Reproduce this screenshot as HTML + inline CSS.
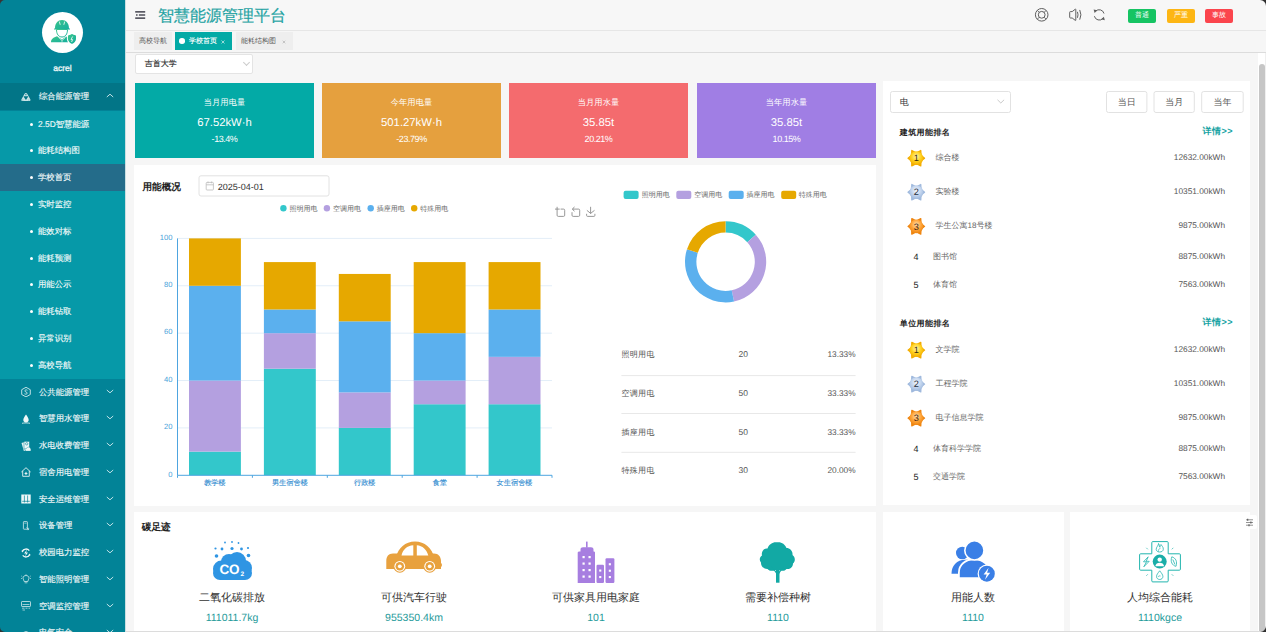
<!DOCTYPE html>
<html><head><meta charset="utf-8">
<style>
*{box-sizing:border-box;margin:0;padding:0}
html,body{width:1266px;height:632px;overflow:hidden;background:#f6f6f6;font-family:"Liberation Sans",sans-serif;color:#333;text-rendering:geometricPrecision}
.a{position:absolute}
#side{left:0;top:0;width:125px;height:632px;background:#028397}
#side .top{left:0;top:0;width:125px;height:83px;background:#028397}
.avatar{left:42px;top:12px;width:41px;height:41px;border-radius:50%;background:#fff}
.uname{left:0;top:62px;width:125px;text-align:center;color:#e8f4f5;font-size:8.5px;line-height:12px;-webkit-text-stroke:0.35px #e8f4f5}
.mh{left:0;width:125px;height:26.75px;color:#eef;font-size:9px;line-height:27px;-webkit-text-stroke:0.15px #f0f7f8}
.mh .t{position:absolute;left:39px;top:0;color:#f0f7f8;transform:scale(0.93);transform-origin:0 50%;white-space:nowrap}
.mh .ic{position:absolute;left:21px;top:9px;width:10px;height:10px}
.mh .ch{position:absolute;left:107.3px;top:9.2px;width:4.4px;height:4.4px;border-right:1px solid #cde;border-bottom:1px solid #cde;transform:rotate(45deg)}
.mh .ch2{position:absolute;left:105.5px;top:10.1px}
.mh .chx.up{transform:rotate(-135deg);top:12.5px}
.sub{left:0;top:110.5px;width:125px;height:268px;background:#0699a8}
.si{position:absolute;left:0;width:125px;height:26.8px;line-height:27px;font-size:9px;color:#f2fafa;-webkit-text-stroke:0.15px #f2fafa}
.si .b{position:absolute;left:29.7px;top:12px;width:3px;height:3px;border-radius:50%;background:#fff}
.si .t{position:absolute;left:38px;top:0;transform:scale(0.93);transform-origin:0 50%;white-space:nowrap}
.si.sel{background:#246c8a}
#hdr{left:125px;top:0;width:1141px;height:31px;background:#f7f7f7;border-bottom:1px solid #e6e6e6}
#tabs{left:125px;top:31px;width:1141px;height:22px;background:#f6f6f6;border-bottom:1px solid #dcdcdc}
.tab{position:absolute;top:1.3px;height:17.5px;line-height:19px;font-size:7px;color:#555;background:#eeeeee}
.card{position:absolute;background:#fff}
.bt{position:absolute;top:590.8px;width:100px;text-align:center;font-size:11px;line-height:14px;color:#333}
.bv{position:absolute;top:610.6px;width:100px;text-align:center;font-size:10.5px;line-height:14px;color:#1e9a9a}
.btn{top:8.5px;width:28px;height:14.5px;border-radius:2px;color:#fff;font-size:7px;line-height:14.5px;text-align:center}
.kpi{position:absolute;top:83px;width:179px;height:75px;color:#fff;text-align:center}
.kt{position:absolute;left:0;width:100%;top:13px;font-size:9px;line-height:12px;transform:scale(0.92);transform-origin:50% 50%}
.kv{position:absolute;left:0;width:100%;top:33.3px;font-size:11.3px;line-height:14px}
.kp{position:absolute;left:0;width:100%;top:51px;font-size:9px;line-height:11px;letter-spacing:-0.45px}
</style></head><body>
<div id="side" class="a">
  <div class="a top"></div>
  <div class="a avatar"></div>
  <svg class="a" style="left:42px;top:12px" width="41" height="41" viewBox="42 12 41 41">
   <defs><linearGradient id="ag" x1="0" y1="0" x2="1" y2="1"><stop offset="0" stop-color="#3cc58a"/><stop offset="1" stop-color="#14ae9f"/></linearGradient></defs>
   <g fill="url(#ag)">
    <path d="M55 28.5C55 23 58 20 62 20C66 20 69 23 69 28.5H70V29.5H54V28.5Z"/>
    <path d="M56.5 29.5H67.5C67.5 34 65.5 37 62 37C58.5 37 56.5 34 56.5 29.5Z" fill="none" stroke="url(#ag)" stroke-width="1"/>
    <path d="M51 42.3C51 39 53.5 37.3 57 36.3L62 39.5L66 36.5C67 37 67.5 37.3 68 37.5V42.3Z"/>
    <path d="M72 34L76 35.5V39C76 41.5 74.5 43 72 44C69.5 43 68 41.5 68 39V35.5Z"/>
   </g>
   <path d="M59.3 21.5L60.2 24.8M64.7 21.5L63.8 24.8" stroke="#fff" stroke-width="0.8"/>
   <path d="M58.5 37.5L62 40.5L65.5 37.5M62 40.5V42.3" stroke="#fff" stroke-width="0.6" fill="none"/>
   <path d="M72 33.3L76.6 35V39C76.6 41.8 74.8 43.5 72 44.6C69.2 43.5 67.4 41.8 67.4 39V35Z" fill="none" stroke="#fff" stroke-width="1"/>
   <path d="M72.6 36.5L71 39.6H72.6L71.6 42" stroke="#fff" stroke-width="0.8" fill="none"/>
  </svg>
  <div class="a uname">acrel</div>
  <div class="a mh" style="top:83.3px;height:27.2px;background:#027587"><span class="t">综合能源管理</span><svg class="ch2" width="8" height="5" viewBox="0 0 8 5"><path d="M0.8 4L4 1.2L7.2 4" fill="none" stroke="#d6ecef" stroke-width="0.9"/></svg></div>
  <svg class="a" style="left:20.6px;top:91.9px" width="10" height="10" viewBox="0 0 10 10"><path d="M4.9 0.9C5.5 0.9 5.9 1.2 6.2 1.7L9.3 7.3C9.8 8.2 9.3 9.1 8.3 9.1H1.5C0.5 9.1 0 8.2 0.5 7.3L3.6 1.7C3.9 1.2 4.3 0.9 4.9 0.9Z" fill="#c9e3e6"/><path d="M2.9 4.2H6.9Q7.4 4.2 7.1 4.8L5.3 7.5Q4.9 8 4.5 7.5L2.7 4.8Q2.4 4.2 2.9 4.2Z" fill="#027587"/><circle cx="4.9" cy="2.7" r="0.65" fill="#027587"/><circle cx="1.9" cy="7.9" r="0.5" fill="#027587" opacity="0.5"/><circle cx="7.9" cy="7.9" r="0.5" fill="#027587" opacity="0.5"/></svg>
  <div class="a sub">
    <div class="si" style="top:0.0px"><span class="b"></span><span class="t">2.5D智慧能源</span></div>
    <div class="si" style="top:26.8px"><span class="b"></span><span class="t">能耗结构图</span></div>
    <div class="si sel" style="top:53.6px"><span class="b"></span><span class="t">学校首页</span></div>
    <div class="si" style="top:80.4px"><span class="b"></span><span class="t">实时监控</span></div>
    <div class="si" style="top:107.2px"><span class="b"></span><span class="t">能效对标</span></div>
    <div class="si" style="top:134.0px"><span class="b"></span><span class="t">能耗预测</span></div>
    <div class="si" style="top:160.8px"><span class="b"></span><span class="t">用能公示</span></div>
    <div class="si" style="top:187.6px"><span class="b"></span><span class="t">能耗钻取</span></div>
    <div class="si" style="top:214.4px"><span class="b"></span><span class="t">异常识别</span></div>
    <div class="si" style="top:241.2px"><span class="b"></span><span class="t">高校导航</span></div>
  </div>
  <div class="a mh" style="top:378.5px"><span class="t">公共能源管理</span><svg class="ch2" width="8" height="5" viewBox="0 0 8 5"><path d="M0.8 1L4 3.8L7.2 1" fill="none" stroke="#d6ecef" stroke-width="0.9"/></svg></div>
  <svg class="a" style="left:20.6px;top:387.1px" width="10" height="10" viewBox="0 0 10 10"><path d="M5 0.3L9.3 2.7V7.5L5 9.9L0.7 7.5V2.7Z" fill="none" stroke="#d2e9ec" stroke-width="0.9"/><path d="M6.4 3.3C5.4 2.5 3.7 2.9 3.8 4C3.9 5 6.2 4.9 6.2 6.1C6.2 7.3 4.4 7.5 3.5 6.8" fill="none" stroke="#d2e9ec" stroke-width="0.9"/></svg>
  <div class="a mh" style="top:405.25px"><span class="t">智慧用水管理</span><svg class="ch2" width="8" height="5" viewBox="0 0 8 5"><path d="M0.8 1L4 3.8L7.2 1" fill="none" stroke="#d6ecef" stroke-width="0.9"/></svg></div>
  <svg class="a" style="left:20.6px;top:413.85px" width="10" height="10" viewBox="0 0 10 10"><path d="M5 0.5C3.5 2.8 2.3 4.3 2.3 5.9C2.3 7.4 3.5 8.4 5 8.4C6.5 8.4 7.7 7.4 7.7 5.9C7.7 4.3 6.5 2.8 5 0.5Z" fill="#eef7f8"/><path d="M1 9.3C3 8.8 7 8.8 9 9.3" stroke="#eef7f8" stroke-width="0.8" fill="none"/></svg>
  <div class="a mh" style="top:432.0px"><span class="t">水电收费管理</span><svg class="ch2" width="8" height="5" viewBox="0 0 8 5"><path d="M0.8 1L4 3.8L7.2 1" fill="none" stroke="#d6ecef" stroke-width="0.9"/></svg></div>
  <svg class="a" style="left:20.6px;top:440.6px" width="10" height="10" viewBox="0 0 10 10"><path d="M0.5 2L5.2 0.6L7.6 8.6L2.9 10Z" fill="#e3f1f2"/><rect x="3" y="0.4" width="5.4" height="7.6" fill="#eef7f8" stroke="#028397" stroke-width="0.5"/><circle cx="5.7" cy="2.8" r="1.2" fill="none" stroke="#028397" stroke-width="0.6"/><path d="M3.8 8.6L6.6 6.4C7.4 5.9 8.2 6 8.8 6.6L9.9 8V10.2H5Z" fill="#eef7f8" stroke="#028397" stroke-width="0.4"/></svg>
  <div class="a mh" style="top:458.75px"><span class="t">宿舍用电管理</span><svg class="ch2" width="8" height="5" viewBox="0 0 8 5"><path d="M0.8 1L4 3.8L7.2 1" fill="none" stroke="#d6ecef" stroke-width="0.9"/></svg></div>
  <svg class="a" style="left:20.6px;top:467.35px" width="10" height="10" viewBox="0 0 10 10"><path d="M0.4 5L5 0.7L9.6 5M1.7 3.9V9.3H8.3V3.9" fill="none" stroke="#e6f3f4" stroke-width="0.9" stroke-linejoin="round"/><path d="M5 4.5Q5.3 6 6.8 6.4Q5.3 6.8 5 8.3Q4.7 6.8 3.2 6.4Q4.7 6 5 4.5Z" fill="#e6f3f4"/></svg>
  <div class="a mh" style="top:485.5px"><span class="t">安全运维管理</span><svg class="ch2" width="8" height="5" viewBox="0 0 8 5"><path d="M0.8 1L4 3.8L7.2 1" fill="none" stroke="#d6ecef" stroke-width="0.9"/></svg></div>
  <svg class="a" style="left:20.6px;top:494.1px" width="10" height="10" viewBox="0 0 10 10"><rect x="0.3" y="0.5" width="9.4" height="9" fill="#eef7f8"/><path d="M3.4 1.5V8.5M6.6 1.5V8.5M1.2 7.3H8.8" stroke="#028397" stroke-width="0.7"/></svg>
  <div class="a mh" style="top:512.25px"><span class="t">设备管理</span><svg class="ch2" width="8" height="5" viewBox="0 0 8 5"><path d="M0.8 1L4 3.8L7.2 1" fill="none" stroke="#d6ecef" stroke-width="0.9"/></svg></div>
  <svg class="a" style="left:20.6px;top:520.85px" width="10" height="10" viewBox="0 0 10 10"><rect x="2.4" y="0.6" width="4" height="7.6" rx="0.5" fill="none" stroke="#d8ecee" stroke-width="0.8"/><path d="M3.3 2.2H5.5" stroke="#d8ecee" stroke-width="0.6"/><path d="M5.5 6.5L7.6 8.6M7.6 6.8V8.6H5.8" fill="none" stroke="#d8ecee" stroke-width="0.7"/></svg>
  <div class="a mh" style="top:539.0px"><span class="t">校园电力监控</span><svg class="ch2" width="8" height="5" viewBox="0 0 8 5"><path d="M0.8 1L4 3.8L7.2 1" fill="none" stroke="#d6ecef" stroke-width="0.9"/></svg></div>
  <svg class="a" style="left:20.6px;top:547.6px" width="10" height="10" viewBox="0 0 10 10"><path d="M8.3 2.6A4.2 4.2 0 0 0 1.2 3.5M1.7 7.4A4.2 4.2 0 0 0 8.8 6.5" fill="none" stroke="#eef7f8" stroke-width="1.3"/><path d="M0.3 2.8L1.6 4.4L2.6 2.5Z M9.7 7.2L8.4 5.6L7.4 7.5Z" fill="#eef7f8"/><path d="M6 1.6L3.1 5.4H5L4.1 8.5L7 4.6H5.1Z" fill="#eef7f8"/></svg>
  <div class="a mh" style="top:565.75px"><span class="t">智能照明管理</span><svg class="ch2" width="8" height="5" viewBox="0 0 8 5"><path d="M0.8 1L4 3.8L7.2 1" fill="none" stroke="#d6ecef" stroke-width="0.9"/></svg></div>
  <svg class="a" style="left:20.6px;top:574.35px" width="10" height="10" viewBox="0 0 10 10"><path d="M3.2 7.5C3.2 6.2 2 5.5 2 4.2C2 2.5 3.3 1.5 5 1.5C6.7 1.5 8 2.5 8 4.2C8 5.5 6.8 6.2 6.8 7.5Z" fill="none" stroke="#d8ecee" stroke-width="0.8"/><path d="M3.6 8.8H6.4M5 0V0.7M0.3 2L1.2 2.6M9.7 2L8.8 2.6M0 4.5H0.9M9.1 4.5H10" stroke="#d8ecee" stroke-width="0.7"/></svg>
  <div class="a mh" style="top:592.5px"><span class="t">空调监控管理</span><svg class="ch2" width="8" height="5" viewBox="0 0 8 5"><path d="M0.8 1L4 3.8L7.2 1" fill="none" stroke="#d6ecef" stroke-width="0.9"/></svg></div>
  <svg class="a" style="left:20.6px;top:601.1px" width="10" height="10" viewBox="0 0 10 10"><rect x="0.5" y="0.5" width="9" height="5" rx="0.6" fill="none" stroke="#d8ecee" stroke-width="0.8"/><path d="M1.5 3.5H8.5M1 7.2H3.5M4.5 7.2H6.5M7.5 7.2H9M1.5 9H4" stroke="#d8ecee" stroke-width="0.7"/></svg>
  <div class="a mh" style="top:619.25px"><span class="t">电气安全</span><svg class="ch2" width="8" height="5" viewBox="0 0 8 5"><path d="M0.8 1L4 3.8L7.2 1" fill="none" stroke="#d6ecef" stroke-width="0.9"/></svg></div>
  <svg class="a" style="left:20.6px;top:630.85px" width="10" height="10" viewBox="0 0 10 10"><path d="M5 0.5L9 2V5C9 7.3 7.3 8.8 5 9.5C2.7 8.8 1 7.3 1 5V2Z" fill="none" stroke="#d8ecee" stroke-width="0.8"/></svg>
</div>

<div id="hdr" class="a">
  <svg class="a" style="left:10px;top:10px" width="11" height="10" viewBox="0 0 11 10"><g fill="#595963"><rect x="0.2" y="1" width="10" height="1.7"/><rect x="1" y="4.2" width="1.6" height="1.6"/><rect x="3.9" y="4.2" width="6.3" height="1.6"/><rect x="0.2" y="7.3" width="10" height="1.7"/></g></svg>
  <div class="a" style="left:33px;top:7.3px;font-size:16px;line-height:20px;color:#1fa3a3;white-space:nowrap;-webkit-text-stroke:0.2px #1fa3a3">智慧能源管理平台</div>
  <svg class="a" style="left:905px;top:0" width="80" height="30" viewBox="1030 0 80 30" fill="none" stroke="#5f5f5f" stroke-width="1">
  <circle cx="1041.7" cy="14.8" r="6.3"/><circle cx="1041.7" cy="14.8" r="3.4"/>
  <path d="M1037.3 10.4L1039.3 12.4M1046.1 10.4L1044.1 12.4M1037.3 19.2L1039.3 17.2M1046.1 19.2L1044.1 17.2" stroke-width="0.9"/>
  <path d="M1069.7 12.3Q1069.7 11.6 1070.4 11.6H1072.2L1075.3 9.2Q1075.8 8.9 1075.8 9.6V20Q1075.8 20.7 1075.3 20.4L1072.2 18H1070.4Q1069.7 18 1069.7 17.3Z" stroke-linejoin="round"/>
  <path d="M1077.6 12.2Q1078.6 14.8 1077.6 17.4M1079.9 10.3Q1082.1 14.8 1079.9 19.3" stroke-linecap="round"/>
  <path d="M1095.6 11.2A5 5 0 0 1 1104 13.5M1103 18.4A5 5 0 0 1 1094.4 16.2"/>
  <path d="M1093.6 9.4L1097.3 10.3L1094.6 12.9Z M1104.8 20.2L1101.2 19.3L1103.9 16.7Z" fill="#5f5f5f" stroke="none"/>
</svg>
  <div class="a btn" style="left:1003px;background:#16c463">普通</div>
  <div class="a btn" style="left:1042px;background:#fdb614">严重</div>
  <div class="a btn" style="left:1080px;background:#fb454d">事故</div>
</div>
<div id="tabs" class="a">
  <div class="tab" style="left:9px;width:38px;text-align:center">高校导航</div>
  <div class="tab" style="left:50px;width:57px;background:#03aaa6;color:#fff"><span class="a" style="left:4.3px;top:6.1px;width:5.6px;height:5.6px;border-radius:50%;background:#fff"></span><span class="a" style="left:14px;top:0;-webkit-text-stroke:0.15px #fff">学校首页</span><svg class="a" style="left:45.8px;top:7.6px" width="4" height="4" viewBox="0 0 4 4"><path d="M0.5 0.5L3.5 3.5M3.5 0.5L0.5 3.5" stroke="#d5efee" stroke-width="0.7"/></svg></div>
  <div class="tab" style="left:111px;width:57px"><span class="a" style="left:5px;top:0">能耗结构图</span><svg class="a" style="left:45.8px;top:7.6px" width="4" height="4" viewBox="0 0 4 4"><path d="M0.7 0.7L3.3 3.3M3.3 0.7L0.7 3.3" stroke="#aaa" stroke-width="0.6"/></svg></div>
</div>
<div class="a sel1" style="left:134.7px;top:54.3px;width:118.7px;height:19.5px;background:#fff;border:1px solid #e4e4e4;border-radius:2px;font-size:8px;line-height:18px;padding-left:9px;color:#222;-webkit-text-stroke:0.1px #222">吉首大学<span class="a" style="left:108.5px;top:5px;width:5px;height:5px;border-right:1px solid #ccc;border-bottom:1px solid #ccc;transform:rotate(45deg)"></span></div>

<div class="kpi" style="left:135px;background:#03aaa6"><div class="kt">当月用电量</div><div class="kv">67.52kW·h</div><div class="kp">-13.4%</div></div>
<div class="kpi" style="left:322px;background:#e5a03e"><div class="kt">今年用电量</div><div class="kv">501.27kW·h</div><div class="kp">-23.79%</div></div>
<div class="kpi" style="left:509px;background:#f46b6e"><div class="kt">当月用水量</div><div class="kv">35.85t</div><div class="kp">20.21%</div></div>
<div class="kpi" style="left:697px;background:#a07ee4"><div class="kt">当年用水量</div><div class="kv">35.85t</div><div class="kp">10.15%</div></div>


<div class="card" style="left:134.3px;top:164.7px;width:741.9px;height:341.2px"></div>
<!--CHART-->
<svg class="a" style="left:134px;top:164px" width="742" height="341" viewBox="0 0 742 341" font-family="Liberation Sans, sans-serif">
<line x1="43.5" y1="263.92" x2="418" y2="263.92" stroke="#e3eef8" stroke-width="1"/>
<line x1="43.5" y1="216.54" x2="418" y2="216.54" stroke="#e3eef8" stroke-width="1"/>
<line x1="43.5" y1="169.16" x2="418" y2="169.16" stroke="#e3eef8" stroke-width="1"/>
<line x1="43.5" y1="121.78" x2="418" y2="121.78" stroke="#e3eef8" stroke-width="1"/>
<line x1="43.5" y1="74.4" x2="418" y2="74.4" stroke="#e3eef8" stroke-width="1"/>
<rect x="55.0" y="287.61" width="51.9" height="23.69" fill="#33c7cb"/>
<rect x="55.0" y="216.54" width="51.9" height="71.07" fill="#b4a0e0"/>
<rect x="55.0" y="121.78" width="51.9" height="94.76" fill="#5bb0ee"/>
<rect x="55.0" y="74.4" width="51.9" height="47.38" fill="#e6a800"/>
<text x="80.95" y="320.5" font-size="7.2" fill="#3790d2" stroke="#3790d2" stroke-width="0.15" text-anchor="middle">教学楼</text>
<rect x="129.9" y="204.69" width="51.9" height="106.61" fill="#33c7cb"/>
<rect x="129.9" y="169.16" width="51.9" height="35.54" fill="#b4a0e0"/>
<rect x="129.9" y="145.47" width="51.9" height="23.69" fill="#5bb0ee"/>
<rect x="129.9" y="98.09" width="51.9" height="47.38" fill="#e6a800"/>
<text x="155.85" y="320.5" font-size="7.2" fill="#3790d2" stroke="#3790d2" stroke-width="0.15" text-anchor="middle">男生宿舍楼</text>
<rect x="204.8" y="263.92" width="51.9" height="47.38" fill="#33c7cb"/>
<rect x="204.8" y="228.38" width="51.9" height="35.54" fill="#b4a0e0"/>
<rect x="204.8" y="157.31" width="51.9" height="71.07" fill="#5bb0ee"/>
<rect x="204.8" y="109.94" width="51.9" height="47.38" fill="#e6a800"/>
<text x="230.75" y="320.5" font-size="7.2" fill="#3790d2" stroke="#3790d2" stroke-width="0.15" text-anchor="middle">行政楼</text>
<rect x="279.7" y="240.23" width="51.9" height="71.07" fill="#33c7cb"/>
<rect x="279.7" y="216.54" width="51.9" height="23.69" fill="#b4a0e0"/>
<rect x="279.7" y="169.16" width="51.9" height="47.38" fill="#5bb0ee"/>
<rect x="279.7" y="98.09" width="51.9" height="71.07" fill="#e6a800"/>
<text x="305.65" y="320.5" font-size="7.2" fill="#3790d2" stroke="#3790d2" stroke-width="0.15" text-anchor="middle">食堂</text>
<rect x="354.6" y="240.23" width="51.9" height="71.07" fill="#33c7cb"/>
<rect x="354.6" y="192.85" width="51.9" height="47.38" fill="#b4a0e0"/>
<rect x="354.6" y="145.47" width="51.9" height="47.38" fill="#5bb0ee"/>
<rect x="354.6" y="98.09" width="51.9" height="47.38" fill="#e6a800"/>
<text x="380.55" y="320.5" font-size="7.2" fill="#3790d2" stroke="#3790d2" stroke-width="0.15" text-anchor="middle">女生宿舍楼</text>
<line x1="43.5" y1="74.4" x2="43.5" y2="311.3" stroke="#4ea5e0" stroke-width="1"/>
<line x1="43.5" y1="311.3" x2="418" y2="311.3" stroke="#4ea5e0" stroke-width="1"/>
<line x1="43.5" y1="311.3" x2="43.5" y2="313.8" stroke="#4ea5e0" stroke-width="1"/>
<line x1="118.4" y1="311.3" x2="118.4" y2="313.8" stroke="#4ea5e0" stroke-width="1"/>
<line x1="193.3" y1="311.3" x2="193.3" y2="313.8" stroke="#4ea5e0" stroke-width="1"/>
<line x1="268.2" y1="311.3" x2="268.2" y2="313.8" stroke="#4ea5e0" stroke-width="1"/>
<line x1="343.1" y1="311.3" x2="343.1" y2="313.8" stroke="#4ea5e0" stroke-width="1"/>
<line x1="418.0" y1="311.3" x2="418.0" y2="313.8" stroke="#4ea5e0" stroke-width="1"/>
<text x="38.5" y="312.5" font-size="7.6" fill="#4aa3da" text-anchor="end">0</text>
<text x="38.5" y="265.12" font-size="7.6" fill="#4aa3da" text-anchor="end">20</text>
<text x="38.5" y="217.74" font-size="7.6" fill="#4aa3da" text-anchor="end">40</text>
<text x="38.5" y="170.36" font-size="7.6" fill="#4aa3da" text-anchor="end">60</text>
<text x="38.5" y="122.98" font-size="7.6" fill="#4aa3da" text-anchor="end">80</text>
<text x="38.5" y="75.6" font-size="7.6" fill="#4aa3da" text-anchor="end">100</text>
<circle cx="149.4" cy="44.2" r="3.2" fill="#33c7cb"/>
<text x="155.4" y="46.8" font-size="7" fill="#666">照明用电</text>
<circle cx="192.9" cy="44.2" r="3.2" fill="#b4a0e0"/>
<text x="198.9" y="46.8" font-size="7" fill="#666">空调用电</text>
<circle cx="236.7" cy="44.2" r="3.2" fill="#5bb0ee"/>
<text x="242.7" y="46.8" font-size="7" fill="#666">插座用电</text>
<circle cx="280.2" cy="44.2" r="3.2" fill="#e6a800"/>
<text x="286.2" y="46.8" font-size="7" fill="#666">特殊用电</text>
<text x="8.5" y="26" font-size="9.6" font-weight="bold" fill="#222">用能概况</text>
<rect x="65" y="11.8" width="130" height="20.2" rx="2" fill="#fff" stroke="#e2e2e2" stroke-width="1"/>
<g transform="translate(71.8,17.5)" fill="none" stroke="#bbb" stroke-width="0.8"><rect x="0.4" y="0.9" width="7.2" height="7.6" rx="0.8"/><path d="M0.4 3.3H7.6M2.2 0V1.8M5.8 0V1.8"/></g>
<text x="83.8" y="25.5" font-size="9" fill="#333">2025-04-01</text>
<rect x="489.6" y="26.7" width="15" height="8.4" rx="2" fill="#33c7cb"/>
<text x="507.7" y="32.7" font-size="7" fill="#666">照明用电</text>
<rect x="542.3" y="26.7" width="15" height="8.4" rx="2" fill="#b4a0e0"/>
<text x="560.2" y="32.7" font-size="7" fill="#666">空调用电</text>
<rect x="594.7" y="26.7" width="15" height="8.4" rx="2" fill="#5bb0ee"/>
<text x="612.6" y="32.7" font-size="7" fill="#666">插座用电</text>
<rect x="647.2" y="26.7" width="15" height="8.4" rx="2" fill="#e6a800"/>
<text x="664.8" y="32.7" font-size="7" fill="#666">特殊用电</text>
<path d="M591.6 57.2A40.6 40.6 0 0 1 621.77 70.63L613.3 78.26A29.2 29.2 0 0 0 591.6 68.6Z" fill="#33c7cb"/>
<path d="M621.77 70.63A40.6 40.6 0 0 1 600.06 137.51L597.68 126.36A29.2 29.2 0 0 0 613.3 78.26Z" fill="#b4a0e0"/>
<path d="M600.06 137.51A40.6 40.6 0 0 1 552.98 85.28L563.82 88.79A29.2 29.2 0 0 0 597.68 126.36Z" fill="#5bb0ee"/>
<path d="M552.98 85.28A40.6 40.6 0 0 1 591.57 57.2L591.58 68.6A29.2 29.2 0 0 0 563.82 88.79Z" fill="#e6a800"/>
<text x="487.4" y="193" font-size="8" fill="#555" letter-spacing="0.35">照明用电</text>
<text x="609.3" y="193" font-size="8.5" fill="#555" text-anchor="middle">20</text>
<text x="721.6" y="193" font-size="8.3" fill="#555" text-anchor="end">13.33%</text>
<text x="487.4" y="231.8" font-size="8" fill="#555" letter-spacing="0.35">空调用电</text>
<text x="609.3" y="231.8" font-size="8.5" fill="#555" text-anchor="middle">50</text>
<text x="721.6" y="231.8" font-size="8.3" fill="#555" text-anchor="end">33.33%</text>
<text x="487.4" y="270.8" font-size="8" fill="#555" letter-spacing="0.35">插座用电</text>
<text x="609.3" y="270.8" font-size="8.5" fill="#555" text-anchor="middle">50</text>
<text x="721.6" y="270.8" font-size="8.3" fill="#555" text-anchor="end">33.33%</text>
<text x="487.4" y="308.7" font-size="8" fill="#555" letter-spacing="0.35">特殊用电</text>
<text x="609.3" y="308.7" font-size="8.5" fill="#555" text-anchor="middle">30</text>
<text x="721.6" y="308.7" font-size="8.3" fill="#555" text-anchor="end">20.00%</text>
<line x1="487.4" y1="211.6" x2="721.6" y2="211.6" stroke="#e8e8e8" stroke-width="1"/>
<line x1="487.4" y1="249.5" x2="721.6" y2="249.5" stroke="#e8e8e8" stroke-width="1"/>
<line x1="487.4" y1="288.3" x2="721.6" y2="288.3" stroke="#e8e8e8" stroke-width="1"/>
</svg>
<!--/CHART-->
<svg class="a" style="left:550px;top:203px" width="50" height="18" viewBox="550 203 50 18" fill="none" stroke="#8c8c8c" stroke-width="0.9" stroke-linecap="round">
 <path d="M555.4 209.1H559.3M561 209.1H563.5Q564.7 209.1 564.7 210.3V215.2Q564.7 216.4 563.5 216.4H558.3Q557.1 216.4 557.1 215.2V207.2"/>
 <path d="M572 212.6V215.2Q572 216.4 573.2 216.4H578.5Q579.7 216.4 579.7 215.2V210.3Q579.7 209.1 578.5 209.1H573"/>
 <path d="M574.2 207.3L572.3 209.1L574.2 210.9" stroke-width="1"/>
 <path d="M590.6 207.2V213.2M587.2 210.6L590.6 213.4L594.2 210.6M586.6 214.2V215.4Q586.6 216.4 587.6 216.4H593.9Q594.9 216.4 594.9 215.4V214.2"/>
</svg>

<div class="card" style="left:883px;top:81px;width:367px;height:424px"></div>
<!--RIGHT-->
<svg class="a" style="left:883px;top:81px" width="367" height="424" viewBox="883 81 367 424" font-family="Liberation Sans, sans-serif">
<rect x="890.5" y="91.5" width="120" height="21" rx="2" fill="#fff" stroke="#e2e2e2"/>
<text x="899.8" y="105.3" font-size="9" fill="#333">电</text>
<path d="M997.5 99.80L1000.8 103.00L1004.1 99.80" fill="none" stroke="#bbb" stroke-width="0.8"/>
<rect x="1106.5" y="91.5" width="40.4" height="21" rx="2" fill="#fff" stroke="#e2e2e2"/>
<text x="1126.7" y="105.3" font-size="9" fill="#555" text-anchor="middle">当日</text>
<rect x="1154.0" y="91.5" width="40.3" height="21" rx="2" fill="#fff" stroke="#e2e2e2"/>
<text x="1174.15" y="105.3" font-size="9" fill="#555" text-anchor="middle">当月</text>
<rect x="1201.7" y="91.5" width="41.5" height="21" rx="2" fill="#fff" stroke="#e2e2e2"/>
<text x="1222.45" y="105.3" font-size="9" fill="#555" text-anchor="middle">当年</text>
<text x="899.8" y="134.7" font-size="8" font-weight="bold" fill="#222" letter-spacing="0.4">建筑用能排名</text>
<text x="1232.9" y="133.7" font-size="9" font-weight="bold" fill="#17a3a3" text-anchor="end" letter-spacing="0.5">详情&gt;&gt;</text>
<defs><radialGradient id="md1" cx="0.5" cy="0.38" r="0.62"><stop offset="0" stop-color="#fff6b0"/><stop offset="0.55" stop-color="#ffd21f"/><stop offset="1" stop-color="#f3ac00"/></radialGradient></defs><path d="M921.60 155.84L924.60 158.20L921.60 160.56ZM920.99 161.61L920.80 165.99L916.91 163.97ZM915.69 163.97L911.80 165.99L911.61 161.61ZM911.00 160.56L908.00 158.20L911.00 155.84ZM911.61 154.79L911.80 150.41L915.69 152.43ZM916.91 152.43L920.80 150.41L920.99 154.79Z" fill="#f3ac00" stroke="#f3ac00" stroke-width="1.2" stroke-linejoin="round"/><circle cx="916.3" cy="158.20" r="6.9" fill="url(#md1)"/><text x="916.3" y="161.40" font-size="9.2" fill="#3a2a10" text-anchor="middle">1</text>
<text x="935.5" y="159.9" font-size="8" fill="#666">综合楼</text>
<text x="1225" y="159.9" font-size="8.3" fill="#555" text-anchor="end">12632.00kWh</text>
<defs><radialGradient id="md2" cx="0.5" cy="0.38" r="0.62"><stop offset="0" stop-color="#f4f8fd"/><stop offset="0.55" stop-color="#c3d5ee"/><stop offset="1" stop-color="#9fb9dd"/></radialGradient></defs><path d="M921.60 189.84L924.60 192.20L921.60 194.56ZM920.99 195.61L920.80 199.99L916.91 197.97ZM915.69 197.97L911.80 199.99L911.61 195.61ZM911.00 194.56L908.00 192.20L911.00 189.84ZM911.61 188.79L911.80 184.41L915.69 186.43ZM916.91 186.43L920.80 184.41L920.99 188.79Z" fill="#9fb9dd" stroke="#9fb9dd" stroke-width="1.2" stroke-linejoin="round"/><circle cx="916.3" cy="192.20" r="6.9" fill="url(#md2)"/><text x="916.3" y="195.40" font-size="9.2" fill="#2a3040" text-anchor="middle">2</text>
<text x="935.5" y="193.9" font-size="8" fill="#666">实验楼</text>
<text x="1225" y="193.9" font-size="8.3" fill="#555" text-anchor="end">10351.00kWh</text>
<defs><radialGradient id="md3" cx="0.5" cy="0.38" r="0.62"><stop offset="0" stop-color="#ffe0b0"/><stop offset="0.55" stop-color="#ffa53a"/><stop offset="1" stop-color="#ee8510"/></radialGradient></defs><path d="M921.60 224.04L924.60 226.40L921.60 228.76ZM920.99 229.81L920.80 234.19L916.91 232.17ZM915.69 232.17L911.80 234.19L911.61 229.81ZM911.00 228.76L908.00 226.40L911.00 224.04ZM911.61 222.99L911.80 218.61L915.69 220.63ZM916.91 220.63L920.80 218.61L920.99 222.99Z" fill="#ee8510" stroke="#ee8510" stroke-width="1.2" stroke-linejoin="round"/><circle cx="916.3" cy="226.40" r="6.9" fill="url(#md3)"/><text x="916.3" y="229.60" font-size="9.2" fill="#3a2010" text-anchor="middle">3</text>
<text x="935.5" y="228.1" font-size="8" fill="#666">学生公寓18号楼</text>
<text x="1225" y="228.1" font-size="8.3" fill="#555" text-anchor="end">9875.00kWh</text>
<text x="916" y="259.8" font-size="9" fill="#222" text-anchor="middle">4</text>
<text x="933" y="258.8" font-size="8" fill="#666">图书馆</text>
<text x="1225" y="258.8" font-size="8.3" fill="#555" text-anchor="end">8875.00kWh</text>
<text x="916" y="287.6" font-size="9" fill="#222" text-anchor="middle">5</text>
<text x="933" y="286.6" font-size="8" fill="#666">体育馆</text>
<text x="1225" y="286.6" font-size="8.3" fill="#555" text-anchor="end">7563.00kWh</text>
<text x="899.8" y="326.3" font-size="8" font-weight="bold" fill="#222" letter-spacing="0.4">单位用能排名</text>
<text x="1232.9" y="325.3" font-size="9" font-weight="bold" fill="#17a3a3" text-anchor="end" letter-spacing="0.5">详情&gt;&gt;</text>
<defs><radialGradient id="md4" cx="0.5" cy="0.38" r="0.62"><stop offset="0" stop-color="#fff6b0"/><stop offset="0.55" stop-color="#ffd21f"/><stop offset="1" stop-color="#f3ac00"/></radialGradient></defs><path d="M921.60 347.74L924.60 350.10L921.60 352.46ZM920.99 353.51L920.80 357.89L916.91 355.87ZM915.69 355.87L911.80 357.89L911.61 353.51ZM911.00 352.46L908.00 350.10L911.00 347.74ZM911.61 346.69L911.80 342.31L915.69 344.33ZM916.91 344.33L920.80 342.31L920.99 346.69Z" fill="#f3ac00" stroke="#f3ac00" stroke-width="1.2" stroke-linejoin="round"/><circle cx="916.3" cy="350.10" r="6.9" fill="url(#md4)"/><text x="916.3" y="353.30" font-size="9.2" fill="#3a2a10" text-anchor="middle">1</text>
<text x="935.5" y="351.8" font-size="8" fill="#666">文学院</text>
<text x="1225" y="351.8" font-size="8.3" fill="#555" text-anchor="end">12632.00kWh</text>
<defs><radialGradient id="md5" cx="0.5" cy="0.38" r="0.62"><stop offset="0" stop-color="#f4f8fd"/><stop offset="0.55" stop-color="#c3d5ee"/><stop offset="1" stop-color="#9fb9dd"/></radialGradient></defs><path d="M921.60 381.74L924.60 384.10L921.60 386.46ZM920.99 387.51L920.80 391.89L916.91 389.87ZM915.69 389.87L911.80 391.89L911.61 387.51ZM911.00 386.46L908.00 384.10L911.00 381.74ZM911.61 380.69L911.80 376.31L915.69 378.33ZM916.91 378.33L920.80 376.31L920.99 380.69Z" fill="#9fb9dd" stroke="#9fb9dd" stroke-width="1.2" stroke-linejoin="round"/><circle cx="916.3" cy="384.10" r="6.9" fill="url(#md5)"/><text x="916.3" y="387.30" font-size="9.2" fill="#2a3040" text-anchor="middle">2</text>
<text x="935.5" y="385.8" font-size="8" fill="#666">工程学院</text>
<text x="1225" y="385.8" font-size="8.3" fill="#555" text-anchor="end">10351.00kWh</text>
<defs><radialGradient id="md6" cx="0.5" cy="0.38" r="0.62"><stop offset="0" stop-color="#ffe0b0"/><stop offset="0.55" stop-color="#ffa53a"/><stop offset="1" stop-color="#ee8510"/></radialGradient></defs><path d="M921.60 415.74L924.60 418.10L921.60 420.46ZM920.99 421.51L920.80 425.89L916.91 423.87ZM915.69 423.87L911.80 425.89L911.61 421.51ZM911.00 420.46L908.00 418.10L911.00 415.74ZM911.61 414.69L911.80 410.31L915.69 412.33ZM916.91 412.33L920.80 410.31L920.99 414.69Z" fill="#ee8510" stroke="#ee8510" stroke-width="1.2" stroke-linejoin="round"/><circle cx="916.3" cy="418.10" r="6.9" fill="url(#md6)"/><text x="916.3" y="421.30" font-size="9.2" fill="#3a2010" text-anchor="middle">3</text>
<text x="935.5" y="419.8" font-size="8" fill="#666">电子信息学院</text>
<text x="1225" y="419.8" font-size="8.3" fill="#555" text-anchor="end">9875.00kWh</text>
<text x="916" y="451.6" font-size="9" fill="#222" text-anchor="middle">4</text>
<text x="933" y="450.6" font-size="8" fill="#666">体育科学学院</text>
<text x="1225" y="450.6" font-size="8.3" fill="#555" text-anchor="end">8875.00kWh</text>
<text x="916" y="479.6" font-size="9" fill="#222" text-anchor="middle">5</text>
<text x="933" y="478.6" font-size="8" fill="#666">交通学院</text>
<text x="1225" y="478.6" font-size="8.3" fill="#555" text-anchor="end">7563.00kWh</text>
</svg>
<!--/RIGHT-->
<div class="card" style="left:134.3px;top:511.7px;width:741.9px;height:130px"></div>
<div class="card" style="left:883px;top:512px;width:181px;height:130px"></div>
<div class="card" style="left:1070px;top:512px;width:180px;height:130px"></div>
<div class="a" style="left:141.8px;top:521.2px;font-size:9.6px;line-height:13px;font-weight:bold;color:#222">碳足迹</div>
<!--BOTTOM-->
<svg class="a" style="left:0;top:500px" width="1266" height="132" viewBox="0 500 1266 132" font-family="Liberation Sans, sans-serif">
<g id="co2">
 <g fill="#2f95e3"><circle cx="221.5" cy="569" r="8.5"/><circle cx="229" cy="562" r="8"/><circle cx="237" cy="561" r="9"/><circle cx="244" cy="568" r="8"/><rect x="213" y="566" width="39" height="14" rx="7"/></g>
 <text x="229.5" y="574" font-size="13.5" font-weight="bold" fill="#fff" text-anchor="middle">CO</text>
 <text x="240.5" y="575.5" font-size="6.5" font-weight="bold" fill="#fff">2</text>
 <g fill="#2f95e3"><circle cx="216.5" cy="556" r="1.8"/><circle cx="222" cy="549" r="1.4"/><circle cx="232" cy="548.5" r="1.6"/><circle cx="241.5" cy="549" r="1.4"/><circle cx="248.5" cy="555.5" r="1.8"/><circle cx="215.5" cy="548.5" r="1.1"/><circle cx="248" cy="548" r="1.1"/><circle cx="225" cy="542.5" r="0.9"/><circle cx="232" cy="542" r="0.9"/><circle cx="238.5" cy="543" r="0.9"/></g>
</g>
<g id="car" fill="#e8a13e">
 <path d="M395.5 558C398.5 548 405 541.6 415 541.6C425 541.6 431.5 548 434.5 558Z"/>
 <path d="M393 553.5H434C438.5 553.5 441 557 441 561V563C442.3 563.5 442.3 566.5 441 567V569H386.3V561C386.3 556.5 388.5 553.5 393 553.5Z"/>
 <path d="M401.5 555.5C403 549.5 407 545.6 413.3 545.3V555.5Z M416.8 545.3C422.5 545.6 426.5 549.5 428.3 555.5H416.8Z" fill="#fff"/>
 <circle cx="399.8" cy="566.3" r="6.4"/><circle cx="399.8" cy="566.3" r="5.4" fill="#fff"/><circle cx="399.8" cy="566.3" r="4.3"/><circle cx="399.8" cy="566.3" r="1.9" fill="#fff"/>
 <circle cx="429.7" cy="566.3" r="6.4"/><circle cx="429.7" cy="566.3" r="5.4" fill="#fff"/><circle cx="429.7" cy="566.3" r="4.3"/><circle cx="429.7" cy="566.3" r="1.9" fill="#fff"/>
</g>
<g id="bld" fill="#a77ee0">
 <rect x="586" y="541.6" width="1.6" height="6"/>
 <path d="M580.5 549.5C580.5 548 581.5 547.2 583 547.2H591C592.5 547.2 593.5 548 593.5 549.5V551.5H594C595 551.5 595 552.3 595 553V582.9H577.7V553C577.7 552.3 578 551.5 579 551.5H580.5Z"/>
 <rect x="596.5" y="564.8" width="7.5" height="18.1" rx="1.2"/>
 <rect x="605.5" y="558.2" width="8.9" height="24.7" rx="1.2"/>
 <g fill="#fff">
  <rect x="582.5" y="556" width="2.2" height="2.2"/><rect x="588.5" y="556" width="2.2" height="2.2"/>
  <rect x="582.5" y="562.5" width="2.2" height="2.2"/><rect x="588.5" y="562.5" width="2.2" height="2.2"/>
  <rect x="582.5" y="569" width="2.2" height="2.2"/><rect x="588.5" y="569" width="2.2" height="2.2"/>
  <rect x="582.5" y="575.5" width="2.2" height="2.2"/><rect x="588.5" y="575.5" width="2.2" height="2.2"/>
  <rect x="599.2" y="569.5" width="2.1" height="2.1"/><rect x="599.2" y="576" width="2.1" height="2.1"/>
  <rect x="608.8" y="563.2" width="2.1" height="2.1"/><rect x="608.8" y="569.7" width="2.1" height="2.1"/><rect x="608.8" y="576" width="2.1" height="2.1"/>
 </g>
</g>
<g id="tree" fill="#12a9a4">
 <path d="M775.5 570C773 571.5 769 571 767.5 569C763.5 569 760.7 566 761 562.5C759 560.5 759.5 557 762 555.5C761 551.5 764 548 767.5 548.5C769 544 773 541.7 777 542.3C781 541.5 785 544 786.5 548C790 548 793 551 792.5 555C795.5 557 795.5 561.5 793 563.5C793 567 790 569.5 786.5 569C785 571 781.5 571.5 779.5 570Z"/>
 <rect x="776" y="566" width="3.5" height="16.7"/>
 <path d="M771 566.5L777 572L776.5 574ZM784 566.5L778.5 572L779 574Z"/>
</g>
<g id="ppl" fill="#3a7fe6">
 <circle cx="962.3" cy="553" r="6.3"/>
 <path d="M951.5 573.7C951.5 565.5 957 559.8 965 559.8H968V573.7Z"/>
 <path d="M958.9 578.2V572.5C958.9 564.5 965.5 559.4 974.2 559.4C983 559.4 989.5 564.5 989.5 572.5V578.2Z" stroke="#fff" stroke-width="1.8"/>
 <circle cx="974.4" cy="550.4" r="9.6" stroke="#fff" stroke-width="1.6"/>
 <circle cx="986.8" cy="573.7" r="9.2" fill="#fff"/>
 <circle cx="986.8" cy="573.7" r="8"/>
 <path d="M988.6 567.8L983.6 574.6H986.7L985 579.8L990.2 572.8H987.1Z" fill="#fff"/>
</g>
<g id="cross" fill="none" stroke="#22b5ae" stroke-width="1">
 <path d="M1152.8 541.6H1167.2Q1168.2 541.6 1168.2 542.6V553.8H1179.4Q1180.4 553.8 1180.4 554.8V569.2Q1180.4 570.2 1179.4 570.2H1168.2V580.9Q1168.2 581.9 1167.2 581.9H1152.8Q1151.8 581.9 1151.8 580.9V570.2H1140.6Q1139.6 570.2 1139.6 569.2V554.8Q1139.6 553.8 1140.6 553.8H1151.8V542.6Q1151.8 541.6 1152.8 541.6Z"/>
 <circle cx="1159.7" cy="561.6" r="7" fill="#1aaea8" stroke="none"/>
 <circle cx="1159.7" cy="559.6" r="2.2" fill="#fff" stroke="none"/>
 <path d="M1155.3 566.3C1155.6 563.6 1157.5 562.7 1159.7 562.7C1161.9 562.7 1163.8 563.6 1164.1 566.3Z" fill="#fff" stroke="none"/>
 <path d="M1158.5 543.5C1158.8 545.5 1156 547 1156.2 549.5C1156.4 551.3 1158 552 1159.7 552C1161.6 552 1163.2 551 1163.3 549.3C1163.5 547 1161.5 545.5 1161 544.5C1160.8 546.5 1159.8 547 1159.5 547C1159.5 545.5 1159.3 544.5 1158.5 543.5Z" stroke-width="0.8"/>
 <path d="M1158.3 551.8C1158 549.8 1159.5 548.5 1160.5 548" stroke-width="0.7"/>
 <path d="M1159.7 570.8C1158 573 1156.5 574.8 1156.5 576.5C1156.5 578.3 1158 579.5 1159.7 579.5C1161.4 579.5 1162.9 578.3 1162.9 576.5C1162.9 574.8 1161.4 573 1159.7 570.8Z" stroke-width="0.8"/>
 <path d="M1157.8 577C1158.5 576 1159.5 575.6 1160.5 576" stroke-width="0.7"/>
 <path d="M1148.2 556.8L1143.5 561.8H1146.5L1143.8 566.8L1149.2 561.3H1146.2Z" stroke-width="0.8" stroke-linejoin="round"/>
 <path d="M1171.8 556.8C1175.8 558 1177.5 561.5 1176 566.3C1172 565.5 1170.2 561.5 1171.8 556.8Z M1172.8 559.5L1175 564.5" stroke-width="0.8"/>
 <path d="M1146.3 547.8L1147.8 549.3M1173.3 547.8L1171.8 549.3M1146.3 575.8L1147.8 574.3M1173.3 575.8L1171.8 574.3" stroke-width="0.7"/>
</g>
</svg>
<!--/BOTTOM-->
<div class="bt" style="left:182px">二氧化碳排放</div><div class="bv" style="left:182px">111011.7kg</div>
<div class="bt" style="left:364px">可供汽车行驶</div><div class="bv" style="left:364px">955350.4km</div>
<div class="bt" style="left:546px">可供家具用电家庭</div><div class="bv" style="left:546px">101</div>
<div class="bt" style="left:728px">需要补偿种树</div><div class="bv" style="left:728px">1110</div>
<div class="bt" style="left:923px">用能人数</div><div class="bv" style="left:923px">1110</div>
<div class="bt" style="left:1110px">人均综合能耗</div><div class="bv" style="left:1110px">1110kgce</div>

<!--SCROLL-->
<div class="a" style="left:1258px;top:53px;width:8px;height:579px;background:#fff"></div><div class="a" style="left:1265px;top:53px;width:1px;height:579px;background:#efefef"></div>
<div class="a" style="left:1259px;top:64px;width:6px;height:568px;background:#c6c6c6;border-radius:3px 3px 0 0"></div>
<div class="a" style="left:1243px;top:515px;width:14px;height:14px;background:#fff;border-radius:2px"></div>
<svg class="a" style="left:1245px;top:518px" width="9" height="9" viewBox="0 0 9 9"><path d="M1 1.8H8M1 4.5H8M1 7.2H8" stroke="#666" stroke-width="0.7"/><path d="M2.7 0.8V2.8M5.9 3.5V5.5M4 6.2V8.2" stroke="#555" stroke-width="1.1"/></svg>
<div class="a" style="left:126px;top:631px;width:1140px;height:1px;background:#dcdcdc"></div>
<div class="a" style="left:125px;top:0;width:1px;height:632px;background:#c9dfe2"></div>
<svg class="a" style="left:0;top:0" width="5" height="5"><path d="M0 0H5A5 5 0 0 0 0 5Z" fill="#3a3434"/></svg>
<svg class="a" style="left:1260px;top:0" width="6" height="6"><path d="M6 0H0A6 6 0 0 1 6 6Z" fill="#2e2e2e"/></svg><svg class="a" style="left:0;top:627px" width="5" height="5"><path d="M0 5H5A5 5 0 0 1 0 0Z" fill="#333"/></svg><svg class="a" style="left:1260px;top:626px" width="6" height="6"><path d="M6 6H0A6 6 0 0 0 6 0Z" fill="#2e2e2e"/></svg>
</body></html>
